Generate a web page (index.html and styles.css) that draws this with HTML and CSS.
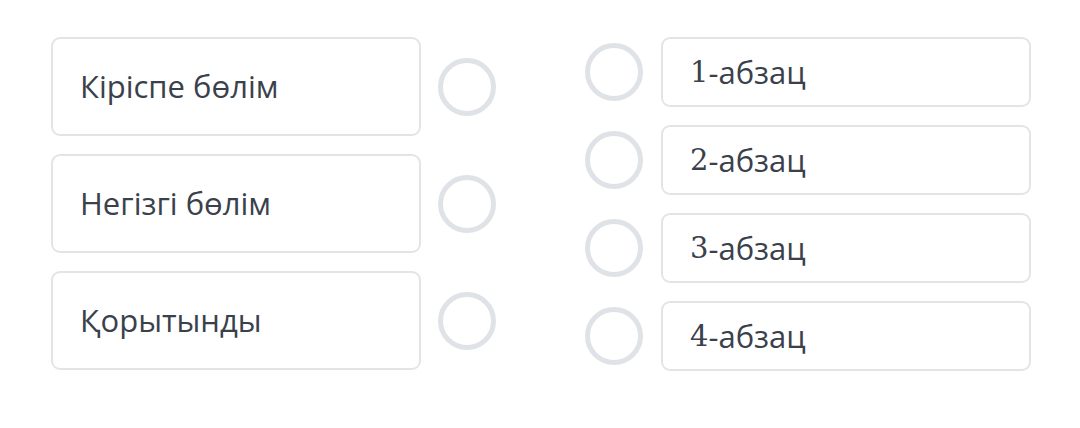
FILE: index.html
```html
<!DOCTYPE html>
<html>
<head>
<meta charset="utf-8">
<link rel="stylesheet" href="styles.css">
</head>
<body>
<div class="page">
  <div class="group left">
    <div class="row">
      <div class="card tall">Кіріспе бөлім</div>
      <div class="dot"></div>
    </div>
    <div class="row">
      <div class="card tall">Негізгі бөлім</div>
      <div class="dot"></div>
    </div>
    <div class="row">
      <div class="card tall">Қорытынды</div>
      <div class="dot"></div>
    </div>
  </div>
  <div class="group right">
    <div class="row">
      <div class="dot"></div>
      <div class="card short"><span class="num">1</span>-абзац</div>
    </div>
    <div class="row">
      <div class="dot"></div>
      <div class="card short"><span class="num">2</span>-абзац</div>
    </div>
    <div class="row">
      <div class="dot"></div>
      <div class="card short"><span class="num">3</span>-абзац</div>
    </div>
    <div class="row">
      <div class="dot"></div>
      <div class="card short"><span class="num">4</span>-абзац</div>
    </div>
  </div>
</div>
</body>
</html>
```
FILE: styles.css
```css
* { box-sizing: border-box; }
html, body { margin: 0; padding: 0; background: #ffffff; }
body {
  font-family: "Open Sans", "Noto Sans", sans-serif;
  color: #3a414b;
  width: 1080px;
  height: 428px;
  overflow: hidden;
}
.page {
  display: flex;
  padding: 37px 0 0 51px;
  gap: 89px;
}
.group {
  display: flex;
  flex-direction: column;
}
.left { gap: 18px; }
.right { gap: 18px; }
.row {
  display: flex;
  align-items: center;
}
.left .row { gap: 17px; }
.right .row { gap: 18px; }
.card {
  width: 370px;
  border: 2px solid #e2e5e8;
  border-radius: 9px;
  display: flex;
  align-items: center;
  font-size: 31px;
  line-height: 1;
}
.tall {
  height: 99px;
  padding-left: 27px;
}
.short {
  height: 70px;
  padding-left: 27px;
}
.num {
  font-family: "DejaVu Serif", "Liberation Serif", serif;
  font-size: 29px;
}
.dot {
  width: 58px;
  height: 58px;
  border-radius: 50%;
  border: 5px solid #dfe3e7;
  flex: none;
}
```
